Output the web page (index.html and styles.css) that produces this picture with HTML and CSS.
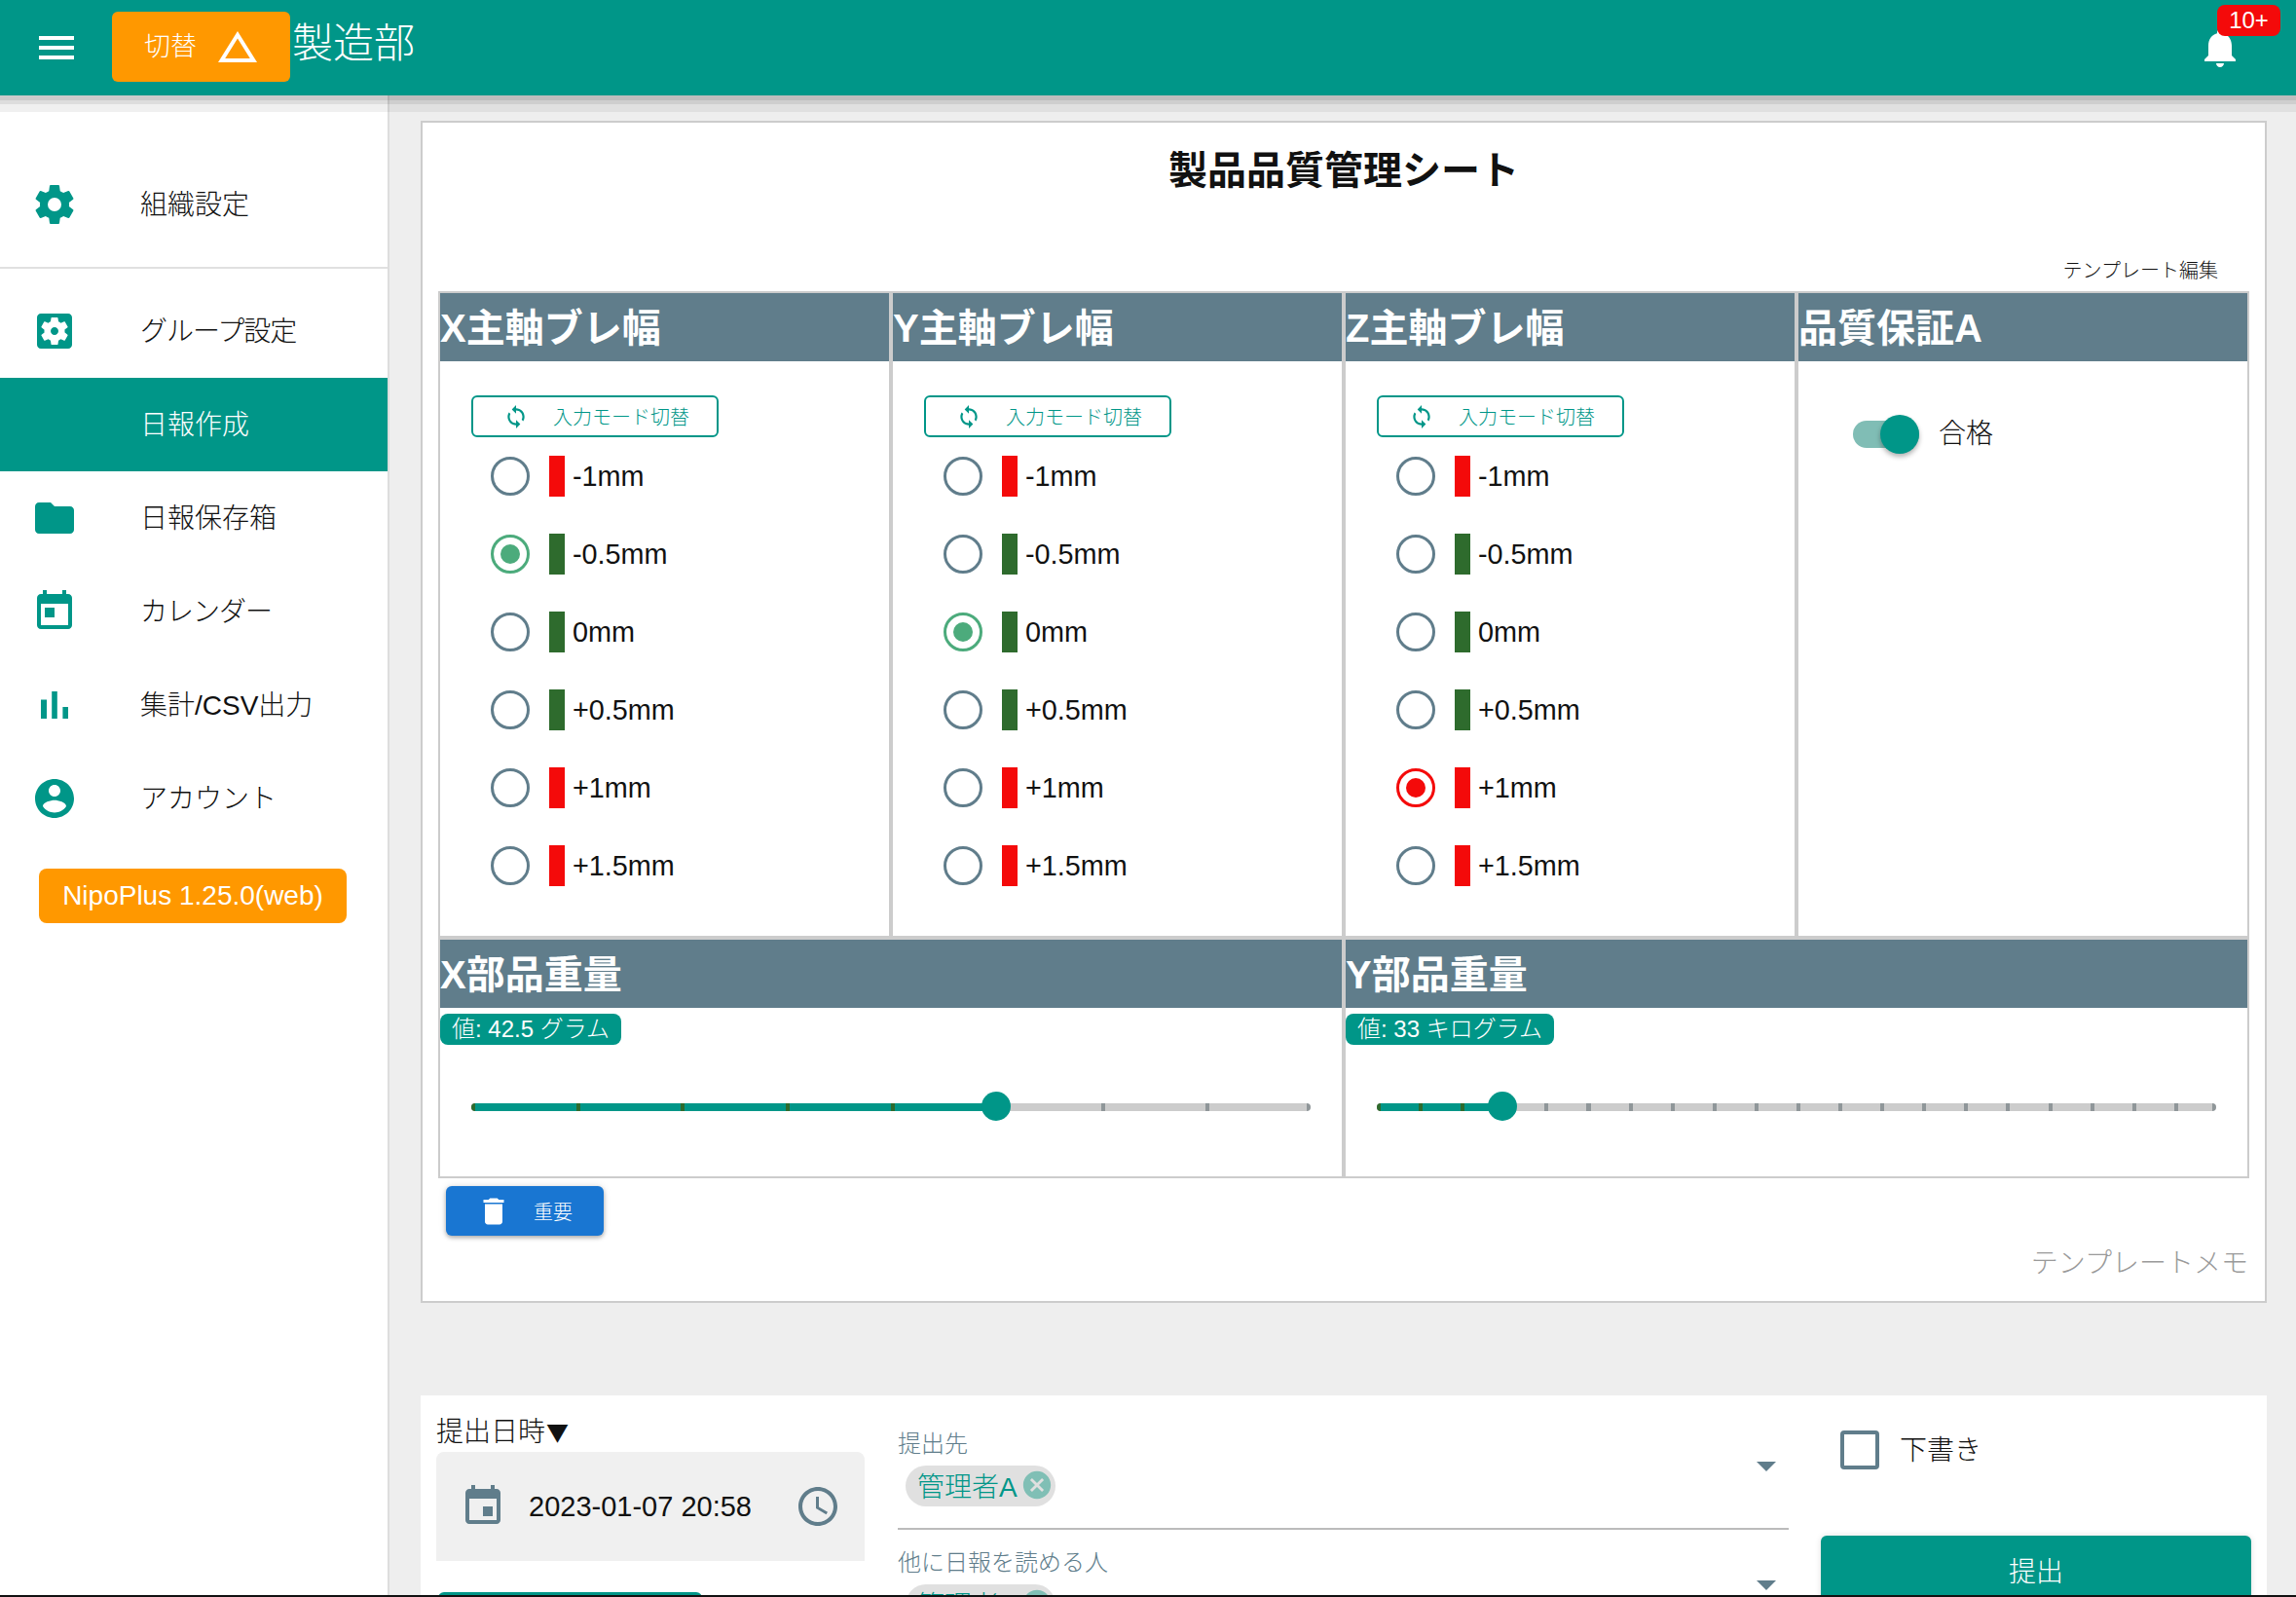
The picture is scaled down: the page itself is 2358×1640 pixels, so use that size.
FILE: index.html
```html
<!DOCTYPE html>
<html lang="ja">
<head>
    <meta charset="UTF-8">
    <title>製品品質管理シート</title>
    <link rel="stylesheet" href="styles.css">
</head>
<body>
    <svg class="defs" xmlns="http://www.w3.org/2000/svg">
        <symbol id="i-sync" viewBox="0 0 24 24"><path d="M12 4V1L8 5l4 4V6c3.31 0 6 2.69 6 6 0 1.01-.25 1.97-.7 2.8l1.46 1.46C19.54 15.03 20 13.57 20 12c0-4.42-3.58-8-8-8zm0 14c-3.31 0-6-2.69-6-6 0-1.01.25-1.97.7-2.8L5.24 7.74C4.46 8.97 4 10.43 4 12c0 4.42 3.58 8 8 8v3l4-4-4-4v3z"/></symbol>
        <symbol id="i-close" viewBox="0 0 24 24"><path d="M12 2C6.47 2 2 6.47 2 12s4.47 10 10 10 10-4.47 10-10S17.53 2 12 2zm5 13.59L15.59 17 12 13.41 8.41 17 7 15.59 10.59 12 7 8.41 8.41 7 12 10.59 15.59 7 17 8.41 13.41 12 17 15.59z"/></symbol>
    </svg>

    <div class="page">
        <header class="topbar">
            <svg class="icon menu-icon" viewBox="0 0 24 24"><path d="M3 18h18v-2H3v2zm0-5h18v-2H3v2zm0-7v2h18V6H3z"/></svg>
            <button class="switch-btn">
                <span class="switch-label">切替</span>
                <svg class="icon" viewBox="0 0 24 24"><path d="M12 7.77L18.39 18H5.61L12 7.77M12 4L2 20h20L12 4z"/></svg>
            </button>
            <div class="dept">製造部</div>
            <div class="bell">
                <svg class="icon" viewBox="0 0 24 24"><path d="M12 22c1.1 0 2-.9 2-2h-4c0 1.1.89 2 2 2zm6-6v-5c0-3.07-1.64-5.64-4.5-6.32V4c0-.83-.67-1.5-1.5-1.5s-1.5.67-1.5 1.5v.68C7.63 5.36 6 7.92 6 11v5l-2 2v1h16v-1l-2-2z"/></svg>
                <span class="badge">10+</span>
            </div>
        </header>

        <div class="layout">
            <aside class="sidebar">
                <a class="nav-item">
                    <svg class="icon" viewBox="0 0 24 24"><path d="M12,15.5A3.5,3.5 0 0,1 8.5,12A3.5,3.5 0 0,1 12,8.5A3.5,3.5 0 0,1 15.5,12A3.5,3.5 0 0,1 12,15.5M19.43,12.97C19.47,12.65 19.5,12.33 19.5,12C19.5,11.67 19.47,11.34 19.43,11L21.54,9.37C21.73,9.22 21.78,8.95 21.66,8.73L19.66,5.27C19.54,5.05 19.27,4.96 19.05,5.05L16.56,6.05C16.04,5.66 15.5,5.32 14.87,5.07L14.5,2.42C14.46,2.18 14.25,2 14,2H10C9.75,2 9.54,2.18 9.5,2.42L9.13,5.07C8.5,5.32 7.96,5.66 7.44,6.05L4.95,5.05C4.73,4.96 4.46,5.05 4.34,5.27L2.34,8.73C2.21,8.95 2.27,9.22 2.46,9.37L4.57,11C4.53,11.34 4.5,11.67 4.5,12C4.5,12.33 4.53,12.65 4.57,12.97L2.46,14.63C2.27,14.78 2.21,15.05 2.34,15.27L4.34,18.73C4.46,18.95 4.73,19.03 4.95,18.95L7.44,17.94C7.96,18.34 8.5,18.68 9.13,18.93L9.5,21.58C9.54,21.82 9.75,22 10,22H14C14.25,22 14.46,21.82 14.5,21.58L14.87,18.93C15.5,18.67 16.04,18.34 16.56,17.94L19.05,18.95C19.27,19.03 19.54,18.95 19.66,18.73L21.66,15.27C21.78,15.05 21.73,14.78 21.54,14.63L19.43,12.97Z"/></svg>
                    <span class="text-up">組織設定</span>
                </a>
                <div class="nav-divider"></div>
                <a class="nav-item">
                    <svg class="icon" viewBox="0 0 24 24"><path d="M12 10c-1.1 0-2 .9-2 2s.9 2 2 2 2-.9 2-2-.9-2-2-2zm7-7H5c-1.11 0-2 .9-2 2v14c0 1.1.89 2 2 2h14c1.11 0 2-.9 2-2V5c0-1.1-.89-2-2-2zm-1.75 9c0 .23-.02.46-.05.68l1.48 1.16c.13.11.17.3.08.45l-1.4 2.42c-.09.15-.27.21-.43.15l-1.74-.7c-.36.28-.76.51-1.18.69l-.26 1.85c-.03.17-.18.3-.35.3h-2.8c-.17 0-.32-.13-.35-.29l-.26-1.85c-.43-.18-.82-.41-1.18-.69l-1.74.7c-.16.06-.34 0-.43-.15l-1.4-2.42c-.09-.15-.05-.34.08-.45l1.48-1.16c-.03-.23-.05-.46-.05-.69 0-.23.02-.46.05-.68l-1.48-1.16c-.13-.11-.17-.3-.08-.45l1.4-2.42c.09-.15.27-.21.43-.15l1.74.7c.36-.28.76-.51 1.18-.69l.26-1.85c.03-.17.18-.3.35-.3h2.8c.17 0 .32.13.35.29l.26 1.85c.43.18.82.41 1.18.69l1.74-.7c.16-.06.34 0 .43.15l1.4 2.42c.09.15.05.34-.08.45l-1.48 1.16c.03.23.05.46.05.69z"/></svg>
                    <span class="text-up kana-tight">グループ設定</span>
                </a>
                <a class="nav-item active">
                    <span class="icon"></span>
                    <span class="text-up">日報作成</span>
                </a>
                <a class="nav-item">
                    <svg class="icon" viewBox="0 0 24 24"><path d="M10 4H4c-1.1 0-1.99.9-1.99 2L2 18c0 1.1.9 2 2 2h16c1.1 0 2-.9 2-2V8c0-1.1-.9-2-2-2h-8l-2-2z"/></svg>
                    <span class="text-up">日報保存箱</span>
                </a>
                <a class="nav-item">
                    <svg class="icon" viewBox="0 0 24 24"><path d="M19 3h-1V1h-2v2H8V1H6v2H5c-1.11 0-1.99.9-1.99 2L3 19c0 1.1.89 2 2 2h14c1.1 0 2-.9 2-2V5c0-1.1-.9-2-2-2zm0 16H5V8h14v11zM7 10h5v5H7z"/></svg>
                    <span class="text-up kana-tight">カレンダー</span>
                </a>
                <a class="nav-item">
                    <svg class="icon" viewBox="0 0 24 24"><path d="M5 9.2h3V19H5zM10.6 5h2.8v14h-2.8zm5.6 8H19v6h-2.8z"/></svg>
                    <span class="text-up">集計/CSV出力</span>
                </a>
                <a class="nav-item">
                    <svg class="icon" viewBox="0 0 24 24"><path d="M12 2C6.48 2 2 6.48 2 12s4.48 10 10 10 10-4.48 10-10S17.52 2 12 2zm0 3c1.66 0 3 1.34 3 3s-1.34 3-3 3-3-1.34-3-3 1.34-3 3-3zm0 14.2c-2.5 0-4.71-1.28-6-3.22.03-1.99 4-3.08 6-3.08 1.99 0 5.97 1.09 6 3.08-1.29 1.94-3.5 3.22-6 3.22z"/></svg>
                    <span class="text-up">アカウント</span>
                </a>
                <div class="version">NipoPlus 1.25.0(web)</div>
            </aside>

            <main class="content">
                <section class="sheet">
                    <h1 class="sheet-title">製品品質管理シート</h1>
                    <div class="template-edit">テンプレート編集</div>

                    <div class="sheet-grid">
                        <div class="cell">
                            <h2 class="cell-head">X主軸ブレ幅</h2>
                            <div class="cell-body">
                                <button class="mode-btn"><svg class="sync"><use href="#i-sync"/></svg>入力モード切替</button>
                                <div class="opt"><span class="radio"></span><span class="bar red"></span>-1mm</div>
                                <div class="opt"><span class="radio on-green"></span><span class="bar green"></span>-0.5mm</div>
                                <div class="opt"><span class="radio"></span><span class="bar green"></span>0mm</div>
                                <div class="opt"><span class="radio"></span><span class="bar green"></span>+0.5mm</div>
                                <div class="opt"><span class="radio"></span><span class="bar red"></span>+1mm</div>
                                <div class="opt"><span class="radio"></span><span class="bar red"></span>+1.5mm</div>
                            </div>
                        </div>
                        <div class="cell">
                            <h2 class="cell-head">Y主軸ブレ幅</h2>
                            <div class="cell-body">
                                <button class="mode-btn"><svg class="sync"><use href="#i-sync"/></svg>入力モード切替</button>
                                <div class="opt"><span class="radio"></span><span class="bar red"></span>-1mm</div>
                                <div class="opt"><span class="radio"></span><span class="bar green"></span>-0.5mm</div>
                                <div class="opt"><span class="radio on-green"></span><span class="bar green"></span>0mm</div>
                                <div class="opt"><span class="radio"></span><span class="bar green"></span>+0.5mm</div>
                                <div class="opt"><span class="radio"></span><span class="bar red"></span>+1mm</div>
                                <div class="opt"><span class="radio"></span><span class="bar red"></span>+1.5mm</div>
                            </div>
                        </div>
                        <div class="cell">
                            <h2 class="cell-head">Z主軸ブレ幅</h2>
                            <div class="cell-body">
                                <button class="mode-btn"><svg class="sync"><use href="#i-sync"/></svg>入力モード切替</button>
                                <div class="opt"><span class="radio"></span><span class="bar red"></span>-1mm</div>
                                <div class="opt"><span class="radio"></span><span class="bar green"></span>-0.5mm</div>
                                <div class="opt"><span class="radio"></span><span class="bar green"></span>0mm</div>
                                <div class="opt"><span class="radio"></span><span class="bar green"></span>+0.5mm</div>
                                <div class="opt"><span class="radio on-red"></span><span class="bar red"></span>+1mm</div>
                                <div class="opt"><span class="radio"></span><span class="bar red"></span>+1.5mm</div>
                            </div>
                        </div>
                        <div class="cell">
                            <h2 class="cell-head">品質保証A</h2>
                            <div class="toggle-row">
                                <span class="toggle"><span class="toggle-thumb"></span></span>
                                <span class="text-up">合格</span>
                            </div>
                        </div>

                        <div class="cell wide">
                            <h2 class="cell-head">X部品重量</h2>
                            <span class="value-chip">値: 42.5 グラム</span>
                            <div class="slider steps-8">
                                <div class="slider-fill" style="width: 62.5%"></div>
                                <span class="slider-thumb" style="left: 62.5%"></span>
                            </div>
                        </div>
                        <div class="cell wide">
                            <h2 class="cell-head">Y部品重量</h2>
                            <span class="value-chip">値: 33 キログラム</span>
                            <div class="slider steps-20">
                                <div class="slider-fill" style="width: 15%"></div>
                                <span class="slider-thumb" style="left: 15%"></span>
                            </div>
                        </div>
                    </div>

                    <button class="important-btn">
                        <svg viewBox="0 0 24 24"><path d="M6 19c0 1.1.9 2 2 2h8c1.1 0 2-.9 2-2V7H6v12zM19 4h-3.5l-1-1h-5l-1 1H5v2h14V4z"/></svg>
                        <span>重要</span>
                    </button>
                    <div class="template-memo">テンプレートメモ</div>
                </section>

                <section class="submit-card">
                    <div class="when">
                        <div class="when-label">提出日時<span class="when-arrow">▼</span></div>
                        <div class="date-box">
                            <svg class="icon" viewBox="0 0 24 24"><path d="M17 12h-5v5h5v-5zM16 1v2H8V1H6v2H5c-1.11 0-1.99.9-1.99 2L3 19c0 1.1.89 2 2 2h14c1.1 0 2-.9 2-2V5c0-1.1-.9-2-2-2h-1V1h-2zm3 18H5V8h14v11z"/></svg>
                            <span class="date-text">2023-01-07 20:58</span>
                            <svg class="icon" viewBox="0 0 24 24"><path d="M11.99 2C6.47 2 2 6.48 2 12s4.47 10 9.99 10C17.52 22 22 17.52 22 12S17.52 2 11.99 2zM12 20c-4.42 0-8-3.58-8-8s3.58-8 8-8 8 3.58 8 8-3.58 8-8 8zm.5-13H11v6l5.25 3.15.75-1.23-4.5-2.67z"/></svg>
                        </div>
                        <div class="when-extra"></div>
                    </div>
                    <div class="recipients">
                        <div class="field underlined">
                            <div>
                                <div class="field-label">提出先</div>
                                <span class="chip">管理者A<svg><use href="#i-close"/></svg></span>
                            </div>
                            <span class="caret"></span>
                        </div>
                        <div class="field">
                            <div>
                                <div class="field-label">他に日報を読める人</div>
                                <span class="chip">管理者A<svg><use href="#i-close"/></svg></span>
                            </div>
                            <span class="caret"></span>
                        </div>
                    </div>
                    <div class="actions">
                        <label class="draft"><span class="checkbox"></span><span class="text-up">下書き</span></label>
                        <button class="submit-btn">提出</button>
                    </div>
                </section>
            </main>
        </div>
        <div class="bottom-line"></div>
    </div>
</body>
</html>
```

FILE: styles.css
```css
* {
    box-sizing: border-box;
}
html, body {
    margin: 0;
    padding: 0;
}
body {
    font-family: "Liberation Sans", "Noto Sans CJK JP", sans-serif;
    font-size: 28px;
    font-weight: 300;
    color: #111;
    background-color: #eeeeee;
}
button {
    font-family: inherit;
    font-weight: inherit;
    border: none;
    padding: 0;
}
.defs {
    display: none;
}
.icon {
    width: 48px;
    height: 48px;
    flex: none;
    fill: currentColor;
}
.text-up {
    padding-bottom: 5px;
}
.kana-tight {
    letter-spacing: -1px;
}

.page {
    height: 1640px;
    display: flex;
    flex-direction: column;
    overflow: hidden;
}
.bottom-line {
    height: 2px;
    flex: none;
    background-color: #111;
}

/* top bar */
.topbar {
    height: 98px;
    flex: none;
    display: flex;
    align-items: center;
    padding: 0 54px 0 34px;
    background-color: #009688;
    color: white;
    position: relative;
    z-index: 2;
    box-shadow: 0 5px 0 rgba(0, 0, 0, 0.08), 0 9px 0 rgba(0, 0, 0, 0.08), 0 17px 0 rgba(0, 0, 0, 0.06);
}
.switch-btn {
    width: 183px;
    height: 72px;
    margin: 0 0 2px 33px;
    padding-left: 33px;
    display: flex;
    align-items: center;
    gap: 18px;
    background-color: #ff9800;
    color: white;
    font-size: 27px;
    border-radius: 6px;
}
.switch-label {
    padding-bottom: 6px;
}
.dept {
    margin-left: 2px;
    margin-top: -18px;
    font-size: 42px;
}
.bell {
    margin-left: auto;
    position: relative;
    height: 48px;
}
.badge {
    position: absolute;
    left: 21px;
    top: -20px;
    width: 65px;
    height: 32px;
    line-height: 32px;
    text-align: center;
    font-size: 24px;
    background-color: #f40a0a;
    border-radius: 8px;
}

.layout {
    flex: 1;
    min-height: 0;
    display: flex;
}

/* left nav */
.sidebar {
    width: 400px;
    flex: none;
    padding-top: 64px;
    background-color: white;
    border-right: 2px solid #ddd;
}
.nav-item {
    height: 96px;
    display: flex;
    align-items: center;
    gap: 64px;
    padding-left: 32px;
    color: #111;
}
.nav-item .icon {
    color: #009688;
}
.nav-divider {
    height: 2px;
    margin: 16px 0;
    background-color: #e0e0e0;
}
.nav-item.active {
    background-color: #009688;
    color: white;
}
.version {
    width: 316px;
    height: 56px;
    line-height: 56px;
    margin: 24px 0 0 40px;
    text-align: center;
    color: white;
    background-color: #ff9800;
    border-radius: 8px;
}

.content {
    flex: 1;
    min-width: 0;
    padding: 26px 30px 0 32px;
}

/* template sheet */
.sheet {
    height: 1214px;
    padding: 25px 16px 0 16px;
    background-color: white;
    border: 2px solid #ccc;
}
.sheet-title {
    margin: 0;
    line-height: 48px;
    font-size: 40px;
    font-weight: 700;
    text-align: center;
}
.template-edit {
    margin-top: 64px;
    margin-bottom: 6px;
    padding-right: 32px;
    line-height: 30px;
    font-size: 20px;
    text-align: right;
}
.sheet-grid {
    width: 1860px;
    display: grid;
    grid-template-columns: repeat(4, 465px);
    grid-template-rows: 664px 247px;
}
.cell {
    border: 2px solid #ccc;
}
.wide {
    grid-column: span 2;
}
.cell-head {
    margin: 0;
    height: 70px;
    line-height: 73px;
    font-size: 40px;
    font-weight: 700;
    color: white;
    background-color: #607d8b;
}
.cell-body {
    padding: 35px 0 0 32px;
}
.mode-btn {
    width: 254px;
    height: 43px;
    display: flex;
    align-items: center;
    padding-left: 31px;
    gap: 25px;
    font-size: 20px;
    color: #009688;
    background-color: white;
    border: 2px solid #009688;
    border-radius: 6px;
}
.sync {
    width: 26px;
    height: 26px;
    fill: #009688;
}
.opt {
    height: 80px;
    display: flex;
    align-items: center;
    padding-left: 20px;
    font-size: 28.8px;
    font-family: "Liberation Sans", sans-serif;
    font-weight: 400;
}
.radio {
    width: 40px;
    height: 40px;
    margin-right: 20px;
    display: flex;
    align-items: center;
    justify-content: center;
    border: 3px solid #607d8b;
    border-radius: 50%;
}
.on-green {
    border-color: #4cab7c;
}
.on-green::after, .on-red::after {
    content: "";
    width: 20px;
    height: 20px;
    border-radius: 50%;
    background-color: #4cab7c;
}
.on-red {
    border-color: #f40a0a;
}
.on-red::after {
    background-color: #f40a0a;
}
.bar {
    width: 16px;
    height: 42px;
    margin-right: 8px;
}
.red {
    background-color: #f40a0a;
}
.green {
    background-color: #2e6b2d;
}
.toggle-row {
    display: flex;
    align-items: center;
    gap: 20px;
    padding: 52px 0 0 56px;
}
.toggle {
    width: 68px;
    height: 28px;
    position: relative;
    border-radius: 14px;
    background-color: #80bdb5;
}
.toggle-thumb {
    position: absolute;
    right: 0;
    top: -6px;
    width: 40px;
    height: 40px;
    border-radius: 50%;
    background-color: #009688;
    box-shadow: 0 3px 5px rgba(0, 0, 0, 0.3);
}
.value-chip {
    display: table;
    margin-top: 6px;
    height: 32px;
    line-height: 31px;
    padding: 0 12px;
    font-size: 24px;
    color: white;
    background-color: #009688;
    border-radius: 8px;
}
.slider {
    position: relative;
    width: 862px;
    height: 8px;
    margin: 60px 0 0 32px;
    border-radius: 4px;
    background-color: #ccc;
    background-image:
        linear-gradient(#8f9699, #8f9699),
        repeating-linear-gradient(90deg, #8f9699 0 4px, transparent 4px var(--step));
    background-size: 4px 100%, 100% 100%;
    background-position: right, left;
    background-repeat: no-repeat;
}
.steps-8 {
    --step: 107.75px;
}
.steps-20 {
    --step: 43.1px;
}
.slider-fill {
    height: 8px;
    border-radius: 4px 0 0 4px;
    background-color: #009688;
    background-image: repeating-linear-gradient(90deg, #2e6b2d 0 4px, transparent 4px var(--step));
}
.slider-thumb {
    position: absolute;
    top: -12px;
    width: 30px;
    height: 30px;
    margin-left: -15px;
    border-radius: 50%;
    background-color: #009688;
}
.important-btn {
    width: 162px;
    height: 51px;
    margin: 8px 0 0 8px;
    display: flex;
    align-items: center;
    gap: 23px;
    padding-left: 31px;
    font-size: 20px;
    color: white;
    background-color: #1976d2;
    border-radius: 6px;
    box-shadow: 0 2px 4px rgba(0, 0, 0, 0.3), 0 0 8px rgba(0, 0, 0, 0.1);
}
.important-btn svg {
    width: 36px;
    height: 36px;
    fill: white;
}
.template-memo {
    margin-top: 9px;
    width: 1859px;
    line-height: 40px;
    text-align: right;
    color: #9a9a9a;
}

/* submit area */
.submit-card {
    margin-top: 95px;
    height: 300px;
    display: flex;
    background-color: white;
    padding: 17px 16px 0;
}
.when {
    width: 440px;
    flex: none;
}
.when-label {
    height: 38px;
    line-height: 36px;
    font-family: "Noto Sans CJK JP", sans-serif;
}
.when-arrow {
    font-size: 23px;
    margin-left: 1px;
}
.date-box {
    height: 112px;
    margin-top: 3px;
    display: flex;
    align-items: center;
    padding: 0 24px 0 24px;
    background-color: #f0f0f0;
    border-radius: 8px 8px 0 0;
    color: #607d8b;
}
.date-text {
    flex: 1;
    padding-left: 23px;
    color: #111;
    font-size: 29px;
    font-family: "Liberation Sans", sans-serif;
    font-weight: 400;
}
.when-extra {
    width: 271px;
    height: 50px;
    margin: 32px 0 0 2px;
    border: 3px solid #009688;
    border-radius: 6px;
}
.recipients {
    width: 915px;
    flex: none;
    margin-left: 34px;
    padding-top: 18px;
}
.field {
    height: 101px;
    display: flex;
    justify-content: space-between;
    margin-bottom: 19px;
}
.underlined {
    height: 103px;
    border-bottom: 2px solid #bbb;
}
.field-label {
    height: 30px;
    line-height: 30px;
    font-size: 24px;
    color: #607d8b;
    margin-bottom: 7px;
}
.chip {
    display: inline-flex;
    align-items: center;
    height: 42px;
    margin-left: 8px;
    padding: 0 2px 2px 12px;
    gap: 3px;
    color: #009688;
    background-color: #e0e0e0;
    border-radius: 21px;
}
.chip svg {
    width: 34px;
    height: 34px;
    fill: #80bfb5;
}
.caret {
    width: 0;
    height: 0;
    margin: 33px 13px 0 0;
    border-left: 10px solid transparent;
    border-right: 10px solid transparent;
    border-top: 10px solid #607d8b;
}
.actions {
    width: 442px;
    flex: none;
    margin-left: 33px;
}
.draft {
    height: 59px;
    display: flex;
    align-items: center;
    gap: 21px;
    padding: 19px 0 0 20px;
}
.checkbox {
    width: 40px;
    height: 40px;
    border: 4px solid #607d8b;
    border-radius: 4px;
}
.submit-btn {
    width: 100%;
    height: 72px;
    margin-top: 68px;
    padding-bottom: 3px;
    font-size: 28px;
    color: white;
    background-color: #009688;
    border-radius: 6px;
    box-shadow: 0 0 6px rgba(0, 0, 0, 0.12);
}
```
